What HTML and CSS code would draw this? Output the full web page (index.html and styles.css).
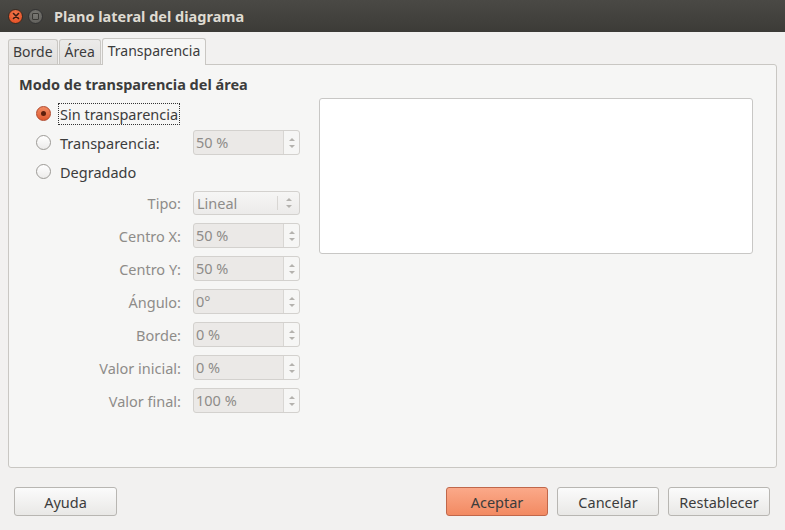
FILE: index.html
```html
<!DOCTYPE html>
<html lang="es">
<head>
<meta charset="utf-8">
<title>Plano lateral del diagrama</title>
<link rel="stylesheet" href="styles.css">
</head>
<body>
<div class="window">
  <div class="titlebar">
    <div class="wbtn close"><svg width="10" height="10" viewBox="0 0 10 10"><path d="M2.5 2.5 L7.5 7.5 M7.5 2.5 L2.5 7.5" stroke="#3a1a10" stroke-width="1.6" stroke-linecap="round"/></svg></div>
    <div class="wbtn max"><div class="sq"></div></div>
    <div class="title">Plano lateral del diagrama</div>
  </div>
  <div class="main">
    <div class="tabs">
      <div class="tab">Borde</div>
      <div class="tab">Área</div>
      <div class="tab active">Transparencia</div>
    </div>
    <div class="panel">
      <div class="heading">Modo de transparencia del área</div>
      <div class="cols">
        <div class="left">
          <div class="radio-row">
            <span class="radio checked"></span><span class="rlabel focus">Sin transparencia</span>
          </div>
          <div class="radio-row">
            <span class="radio"></span><span class="rlabel wide">Transparencia:</span>
            <div class="spin"><span class="val">50 %</span><span class="arrows"><i class="up"></i><i class="dn"></i></span></div>
          </div>
          <div class="radio-row">
            <span class="radio"></span><span class="rlabel">Degradado</span>
          </div>
          <div class="form">
            <label>Tipo:</label><div class="spin combo"><span class="val">Lineal</span><span class="arrows"><i class="up"></i><i class="dn"></i></span></div>
            <label>Centro X:</label><div class="spin"><span class="val">50 %</span><span class="arrows"><i class="up"></i><i class="dn"></i></span></div>
            <label>Centro Y:</label><div class="spin"><span class="val">50 %</span><span class="arrows"><i class="up"></i><i class="dn"></i></span></div>
            <label>Ángulo:</label><div class="spin"><span class="val">0°</span><span class="arrows"><i class="up"></i><i class="dn"></i></span></div>
            <label>Borde:</label><div class="spin"><span class="val">0 %</span><span class="arrows"><i class="up"></i><i class="dn"></i></span></div>
            <label>Valor inicial:</label><div class="spin"><span class="val">0 %</span><span class="arrows"><i class="up"></i><i class="dn"></i></span></div>
            <label>Valor final:</label><div class="spin"><span class="val">100 %</span><span class="arrows"><i class="up"></i><i class="dn"></i></span></div>
          </div>
        </div>
        <div class="preview"></div>
      </div>
    </div>
    <div class="buttons">
      <button class="btn help">Ayuda</button>
      <div class="spacer"></div>
      <button class="btn primary">Aceptar</button>
      <button class="btn">Cancelar</button>
      <button class="btn">Restablecer</button>
    </div>
  </div>
</div>
</body>
</html>
```
FILE: styles.css
```css
* { box-sizing: border-box; }
html, body { margin: 0; padding: 0; }
body {
  width: 785px; height: 530px; overflow: hidden;
  background: #f2f1f0;
  font-family: "Noto Sans", "Open Sans", sans-serif;
  font-size: 14.5px;
  color: #3c3c3c;
}
.window { width: 785px; height: 530px; display: flex; flex-direction: column; }
.titlebar {
  height: 32px; flex: none;
  background: linear-gradient(#4a4945, #3c3b37);
  display: flex; align-items: center;
  padding-left: 8px;
}
.wbtn {
  width: 15px; height: 15px; border-radius: 50%;
  display: flex; align-items: center; justify-content: center;
  margin-right: 5px;
}
.wbtn.close { background: radial-gradient(circle at 50% 35%, #f47a4e, #e1461c); border: 1px solid #3a2a20; }
.wbtn.max { background: radial-gradient(circle at 50% 35%, #7a7974, #5b5a56); border: 1px solid #333; }
.wbtn .sq { width: 7px; height: 7px; border: 1.5px solid #3a3935; border-radius: 1px; }
.title { color: #dfdbd2; font-weight: bold; font-size: 14.5px; margin-left: 6px; }

.main { flex: 1; display: flex; flex-direction: column; padding: 5px 8px 0 8px; }
.tabs { display: flex; align-items: flex-end; height: 27px; padding-left: 0; }
.tab {
  height: 25px; padding: 0 5px; line-height: 24px; font-size: 14px;
  border: 1px solid #c9c7c3; border-bottom: none;
  border-radius: 3px 3px 0 0;
  background: linear-gradient(#ecebea, #e1e0de);
  margin-right: 1px; color: #3c3c3c;
}
.tab:first-child { padding: 0 4px; }
.tab.active {
  height: 27px; background: #f6f6f5; position: relative; top: 1px;
  line-height: 24px;
}
.panel {
  height: 404px; border: 1px solid #c9c7c3; border-radius: 0 3px 3px 3px;
  background: #f6f6f5; padding: 9px 23px 0 10px;
}
.heading { font-weight: bold; height: 20px; line-height: 20px; }
.cols { display: flex; margin-top: 4px; }
.left { width: 300px; flex: none; }
.radio-row { display: flex; align-items: center; height: 29px; padding-left: 17px; }
.radio-row:first-child { margin-top: 1px; }
.radio {
  width: 15px; height: 15px; border-radius: 50%;
  border: 1px solid #9c9a96; background: linear-gradient(#ffffff, #ecebea);
  margin-right: 9px; flex: none; position: relative;
}
.radio.checked { border-color: #b0472a; background: linear-gradient(#f08a62, #df5a2f); }
.radio.checked::after {
  content: ""; position: absolute; left: 4px; top: 4px; width: 5px; height: 5px;
  border-radius: 50%; background: #5c1f0c;
}
.rlabel { color: #3c3c3c; }
.rlabel.focus { outline: 1px dotted #333; outline-offset: 0; padding: 0 1px; margin-left: -1px; }
.rlabel.wide { width: 133px; }
.spin {
  width: 107px; height: 25px; border: 1px solid #d3d1ce; border-radius: 3px;
  background: #ebe9e7; display: flex; align-items: stretch; color: #8e8c89;
}
.spin .val { flex: 1; padding-left: 2px; line-height: 23px; }
.spin .arrows {
  width: 16px; border-left: 1px solid #d8d6d3; background: #f6f6f5;
  display: flex; flex-direction: column; align-items: center; justify-content: center; gap: 4px;
  border-radius: 0 3px 3px 0;
}
.spin .arrows i { width: 0; height: 0; border-left: 3px solid transparent; border-right: 3px solid transparent; }
.spin .arrows i.up { border-bottom: 3px solid #b4b2ae; }
.spin .arrows i.dn { border-top: 3px solid #b4b2ae; }
.spin.combo { background: linear-gradient(#f6f6f5, #ecebea); height: 24px; }
.spin.combo .arrows { border-left: 1px solid #d8d6d3; background: transparent; width: 22px; margin: 4px 0; }
.spin.combo .val { padding-left: 3px; line-height: 22px; }
.form {
  display: grid; grid-template-columns: 162px 107px; column-gap: 12px; row-gap: 8px;
  margin-top: 5px; align-items: center;
}
.form label { text-align: right; color: #8e8c89; }
.preview {
  width: 435px; height: 156px;
  background: #fff; border: 1px solid #c8c7c5; border-radius: 3px;
}
.buttons { display: flex; align-items: center; margin-top: 19px; padding: 0 7px 0 6px; gap: 9px; }
.spacer { flex: 1; }
.btn {
  width: 102px; height: 29px; font-family: inherit; font-size: 14.5px; color: #3c3c3c;
  border: 1px solid #b8b6b2; border-radius: 3px;
  background: linear-gradient(#fbfbfb, #e9e8e6);
}
.btn.help { width: 103px; }
.btn.primary { background: linear-gradient(#fba989, #f28a62); border-color: #c0674a; }
```
